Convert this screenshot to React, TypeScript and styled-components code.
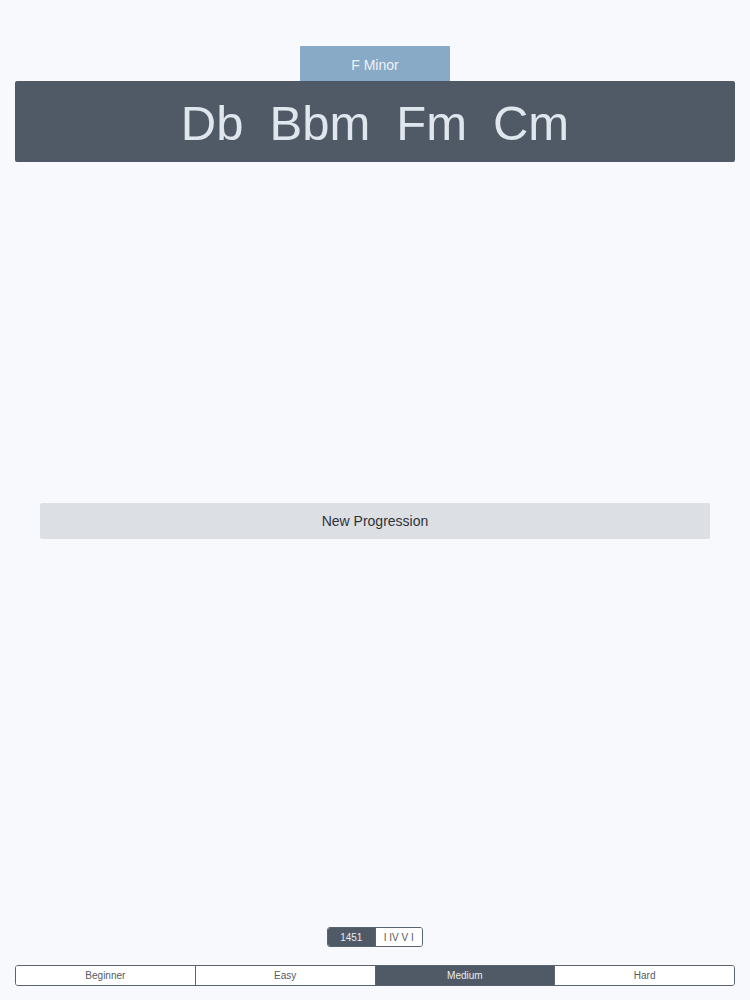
import React, { useState } from "react";
import styled, { createGlobalStyle } from "styled-components";

const Global = createGlobalStyle`
  html, body { margin: 0; padding: 0; background: #f7f9fc; }
  body { font-family: "Liberation Sans", Arial, sans-serif; }
  * { box-sizing: border-box; }
`;

const Page = styled.div`
  width: 750px;
  height: 1000px;
  display: flex;
  flex-direction: column;
  padding: 46px 15px 14px;
`;

const KeyTab = styled.div`
  align-self: center;
  width: 150px;
  height: 35px;
  padding-top: 3px;
  background: #88aac7;
  color: #eef3f8;
  font-size: 14px;
  display: flex;
  align-items: center;
  justify-content: center;
  border-radius: 1px 1px 0 0;
`;

const Banner = styled.div`
  height: 81px;
  background: #505a67;
  border-radius: 2px;
  display: flex;
  align-items: center;
  justify-content: center;
  gap: 26px;
  color: #dfe6ee;
  font-size: 49px;
  padding-left: 0;
`;

const Chord = styled.span`
  line-height: 1;
  padding-top: 3px;
`;

const Middle = styled.div`
  flex: 1;
  display: flex;
  flex-direction: column;
  padding: 341px 25px 0 25px;
`;

const NewButton = styled.button`
  height: 36px;
  border: none;
  border-radius: 2px;
  background: #dcdfe4;
  color: #2f3338;
  font-family: "Liberation Sans", Arial, sans-serif;
  font-size: 14px;
  cursor: pointer;
  width: 670px;
`;

const Segmented = styled.div<{ $width: number; $height: number }>`
  display: flex;
  align-self: center;
  width: ${(p) => p.$width}px;
  height: ${(p) => p.$height}px;
  border: 1px solid #5a6470;
  border-radius: 3px;
  overflow: hidden;
  background: #ffffff;
`;

const Segment = styled.button<{ $active: boolean }>`
  flex: 1;
  border: none;
  border-left: 1px solid #5a6470;
  &:first-child { border-left: none; }
  background: ${(p) => (p.$active ? "#505a67" : "#ffffff")};
  color: ${(p) => (p.$active ? "#e6ebf0" : "#555b62")};
  font-family: "Liberation Sans", Arial, sans-serif;
  font-size: 10px;
  padding: 0;
  cursor: pointer;
`;

const Footer = styled.div`
  display: flex;
  flex-direction: column;
  gap: 18px;
`;

export default function App() {
  const [mode, setMode] = useState(0);
  const [level, setLevel] = useState(2);
  const levels = ["Beginner", "Easy", "Medium", "Hard"];
  return (
    <Page>
      <Global />
      <KeyTab>F Minor</KeyTab>
      <Banner>
        {["Db", "Bbm", "Fm", "Cm"].map((c) => (
          <Chord key={c}>{c}</Chord>
        ))}
      </Banner>
      <Middle>
        <NewButton>New Progression</NewButton>
      </Middle>
      <Footer>
        <Segmented $width={96} $height={20}>
          {["1451", "I IV V I"].map((m, i) => (
            <Segment key={m} $active={mode === i} onClick={() => setMode(i)}>
              {m}
            </Segment>
          ))}
        </Segmented>
        <Segmented $width={720} $height={21}>
          {levels.map((l, i) => (
            <Segment key={l} $active={level === i} onClick={() => setLevel(i)}>
              {l}
            </Segment>
          ))}
        </Segmented>
      </Footer>
    </Page>
  );
}
